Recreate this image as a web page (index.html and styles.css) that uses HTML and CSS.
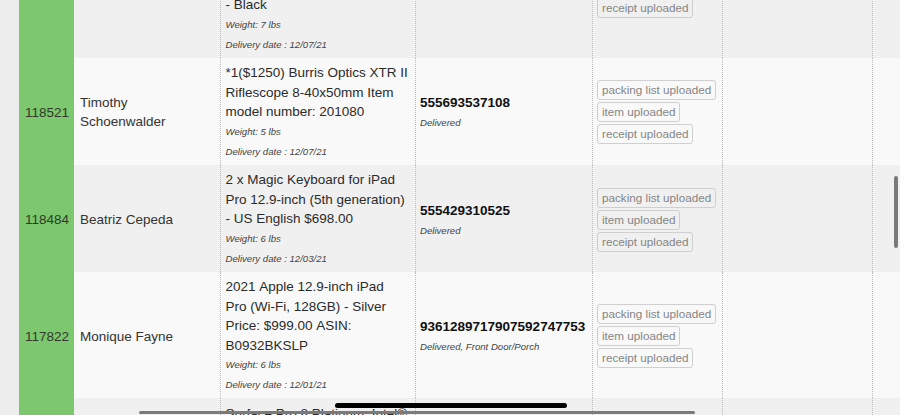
FILE: index.html
```html
<!DOCTYPE html>
<html lang="en">
<head>
<meta charset="utf-8">
<title>Orders</title>
<link rel="stylesheet" href="styles.css">
</head>
<body>
<div class="viewport">
  <table class="orders">
    <colgroup>
      <col class="c-id"><col class="c-name"><col class="c-desc"><col class="c-track"><col class="c-docs"><col class="c-extra"><col class="c-extra">
    </colgroup>
    <tbody>
      <tr class="shade">
        <td class="id">118530</td>
        <td class="name">Daniel Whitaker</td>
        <td class="desc sep">
          <p class="title">Apple Magic Keyboard with Touch ID for Mac models compatible with Apple silicon, Numeric Keypad, US English <span class="keep">- Black</span></p>
          <p class="meta">Weight: 7 lbs</p>
          <p class="meta">Delivery date : 12/07/21</p>
        </td>
        <td class="track sep">
          <div class="num">555693537115</div>
          <div class="status">Delivered</div>
        </td>
        <td class="docs sep">
          <span class="badge">packing list uploaded</span>
          <span class="badge">item uploaded</span>
          <span class="badge">receipt uploaded</span>
        </td>
        <td class="sep"></td>
        <td class="sep"></td>
      </tr>
      <tr class="light">
        <td class="id">118521</td>
        <td class="name">Timothy Schoenwalder</td>
        <td class="desc sep">
          <p class="title">*1($1250) Burris Optics XTR II Riflescope 8-40x50mm Item model number: 201080</p>
          <p class="meta">Weight: 5 lbs</p>
          <p class="meta">Delivery date : 12/07/21</p>
        </td>
        <td class="track sep">
          <div class="num">555693537108</div>
          <div class="status">Delivered</div>
        </td>
        <td class="docs sep">
          <span class="badge">packing list uploaded</span>
          <span class="badge">item uploaded</span>
          <span class="badge">receipt uploaded</span>
        </td>
        <td class="sep"></td>
        <td class="sep"></td>
      </tr>
      <tr class="shade">
        <td class="id">118484</td>
        <td class="name">Beatriz Cepeda</td>
        <td class="desc sep">
          <p class="title">2 x Magic Keyboard for iPad Pro 12.9-inch (5th generation) - US English $698.00</p>
          <p class="meta">Weight: 6 lbs</p>
          <p class="meta">Delivery date : 12/03/21</p>
        </td>
        <td class="track sep">
          <div class="num">555429310525</div>
          <div class="status">Delivered</div>
        </td>
        <td class="docs sep">
          <span class="badge">packing list uploaded</span>
          <span class="badge">item uploaded</span>
          <span class="badge">receipt uploaded</span>
        </td>
        <td class="sep"></td>
        <td class="sep"></td>
      </tr>
      <tr class="light">
        <td class="id">117822</td>
        <td class="name">Monique Fayne</td>
        <td class="desc sep">
          <p class="title">2021 Apple 12.9-inch iPad Pro (Wi-Fi, 128GB) - Silver Price: $999.00 ASIN: B0932BKSLP</p>
          <p class="meta">Weight: 6 lbs</p>
          <p class="meta">Delivery date : 12/01/21</p>
        </td>
        <td class="track sep">
          <div class="num">9361289717907592747753</div>
          <div class="status">Delivered, Front Door/Porch</div>
        </td>
        <td class="docs sep">
          <span class="badge">packing list uploaded</span>
          <span class="badge">item uploaded</span>
          <span class="badge">receipt uploaded</span>
        </td>
        <td class="sep"></td>
        <td class="sep"></td>
      </tr>
      <tr class="shade">
        <td class="id">117790</td>
        <td class="name">Kevin Marsh</td>
        <td class="desc sep">
          <p class="title">Surface Pro 8 Platinum, Intel® Evo Core i7, 16GB RAM, 512GB SSD</p>
          <p class="meta">Weight: 4 lbs</p>
          <p class="meta">Delivery date : 11/30/21</p>
        </td>
        <td class="track sep">
          <div class="num">555429310411</div>
          <div class="status">Delivered</div>
        </td>
        <td class="docs sep">
          <span class="badge">packing list uploaded</span>
        </td>
        <td class="sep"></td>
        <td class="sep"></td>
      </tr>
    </tbody>
  </table>
</div>
<div class="vscroll"></div>
<div class="hscroll"></div>
<div class="home-indicator"></div>
</body>
</html>
```
FILE: styles.css
```css
html, body {
  margin: 0;
  height: 100%;
  overflow: hidden;
}

body {
  background: #ededed;
  font-family: "Liberation Sans", Arial, sans-serif;
  color: #333;
}

.viewport {
  padding-left: 19px;
  height: 415px;
  overflow: hidden;
}

.orders {
  border-collapse: separate;
  border-spacing: 0;
  table-layout: fixed;
  width: 1003px;
  margin-top: -88.5px;
}

.c-id { width: 55px; }
.c-name { width: 146px; }
.c-desc { width: 195px; }
.c-track { width: 177px; }
.c-docs { width: 130px; }
.c-extra { width: 150px; }

.orders td {
  box-sizing: border-box;
  padding: 5.6px 5.5px 3px;
  vertical-align: middle;
  font-size: 13.5px;
  line-height: 19.5px;
}

tr.shade td { background: #f0f0f0; }
tr.light td { background: #f9f9f9; }

.orders td.id {
  background: #7dc76e;
  padding-left: 6px;
  padding-right: 0;
  color: #2f3a2c;
}

.orders td.name {
  padding-left: 6px;
  padding-right: 6px;
  color: #333;
}

.orders .sep {
  border-left: 1px dotted #bdbdbd;
}

.orders td.desc {
  padding-left: 4.5px;
  padding-right: 6.8px;
}

.title {
  margin: 0;
  color: #2b2b2b;
  font-kerning: none;
}

.keep {
  white-space: nowrap;
}

.meta {
  margin: 0;
  font-size: 9.6px;
  line-height: 20px;
  font-style: italic;
  color: #444;
}

.orders td.track {
  padding-left: 4px;
}

.num {
  font-weight: bold;
  color: #111;
  line-height: 17px;
  white-space: nowrap;
}

.status {
  margin-top: 5px;
  font-size: 9.6px;
  line-height: 14px;
  font-style: italic;
  color: #444;
}

.orders td.docs {
  padding-left: 4px;
}

.badge {
  display: block;
  width: fit-content;
  box-sizing: border-box;
  font-size: 11.7px;
  line-height: 18px;
  padding: 0 4px;
  border: 1px solid #cfcfcf;
  border-radius: 3px;
  color: #858585;
  white-space: nowrap;
}

.badge + .badge {
  margin-top: 2px;
}

.vscroll {
  position: fixed;
  left: 894px;
  top: 176px;
  width: 3.5px;
  height: 72px;
  border-radius: 2px;
  background: #7a7a7a;
}

.hscroll {
  position: fixed;
  left: 139px;
  top: 411px;
  width: 556px;
  height: 2.5px;
  border-radius: 1.5px;
  background: #7a7a7a;
}

.home-indicator {
  position: fixed;
  left: 335px;
  top: 403px;
  width: 232px;
  height: 5px;
  border-radius: 3px;
  background: #000;
}
```
